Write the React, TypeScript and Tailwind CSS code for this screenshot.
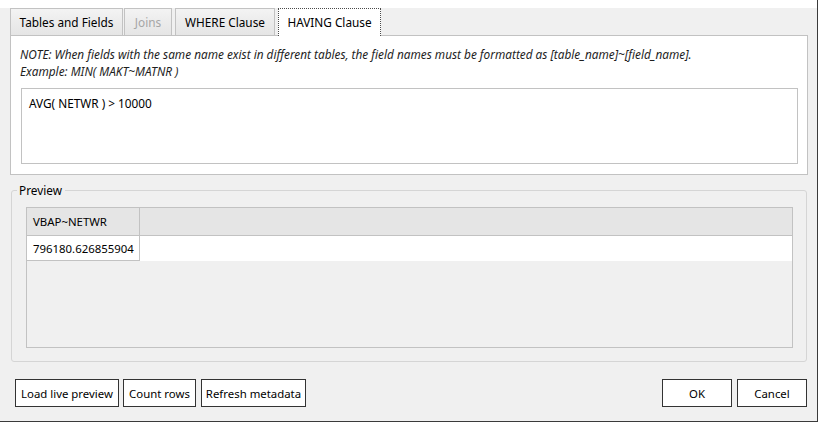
import React from "react"

const tabs = [
  { label: "Tables and Fields", w: "w-[113px]", ml: "ml-0", state: "normal" },
  { label: "Joins", w: "w-[48px]", ml: "ml-[1px]", state: "disabled" },
  { label: "WHERE Clause", w: "w-[100px]", ml: "ml-[3px]", state: "normal" },
  { label: "HAVING Clause", w: "w-[103px]", ml: "ml-[3px]", state: "active" },
]

function Tab({ label, w, ml, state }: { label: string; w: string; ml: string; state: string }) {
  if (state === "active") {
    return (
      <div
        className={`${w} ${ml} relative z-10 -mb-px flex h-[28px] items-center justify-center border border-b-0 border-dotted border-[#4a4a4a] bg-white text-black`}
      >
        {label}
      </div>
    )
  }
  return (
    <div
      className={`${w} ${ml} flex h-[27px] items-center justify-center border border-b-0 border-[#c2c2c2] bg-linear-to-b from-[#f3f3f3] to-[#e5e5e5] ${
        state === "disabled" ? "text-[#a6a6a6]" : "text-black"
      }`}
    >
      {label}
    </div>
  )
}

function Button({ label, w }: { label: string; w: string }) {
  return (
    <button
      className={`${w} flex h-[28px] items-center justify-center border border-[#333333] bg-white text-[11.4px] text-black`}
    >
      {label}
    </button>
  )
}

export default function App() {
  return (
    <div className="h-[423px] w-[819px] bg-white font-['Noto_Sans',sans-serif] text-[11.8px] leading-[17px]">
      <div className="flex h-[422px] w-[818px] flex-col border-r border-b border-[#3a3a3a] bg-[#f0f0f0]">
        {/* strip above tabs */}
        <div className="h-[8px] shrink-0 bg-white" />

        {/* Tab headers */}
        <div className="ml-[10px] flex items-end">
          {tabs.map((t) => (
            <Tab key={t.label} {...t} />
          ))}
        </div>

        {/* Tab page */}
        <div className="ml-[10px] h-[140px] w-[798px] border border-[#c2c2c2] bg-white pt-[10px] pl-[9px]">
          <p className="italic text-[#1e1e1e]">
            NOTE: When fields with the same name exist in different tables, the field names must be formatted as
            [table_name]~[field_name].
          </p>
          <p className="italic text-[#1e1e1e]">Example: MIN( MAKT~MATNR )</p>
          <div className="mt-[8px] ml-px h-[76px] w-[777px] border border-[#c2c2c2] bg-white px-[7px] pt-[6px] text-black">
            AVG( NETWR ) &gt; 10000
          </div>
        </div>

        {/* Preview group */}
        <fieldset className="mt-[7px] ml-[11px] w-[796px] rounded-[3px] border border-[#d5d5d5]">
          <legend className="ml-[5px] px-[2px] pr-[3px] leading-[16px] text-black">Preview</legend>
          <div className="mt-[9px] mb-[13px] ml-[14px] flex h-[141px] w-[767px] flex-col border border-[#c2c2c2] bg-[#f0f0f0] text-[11.4px]">
            <div className="flex h-[28px] shrink-0 border-b border-[#c2c2c2] bg-[#e5e5e5]">
              <div className="flex w-[113px] items-center border-r border-[#c2c2c2] pl-[6px] text-black">VBAP~NETWR</div>
            </div>
            <div className="flex h-[25px] shrink-0 bg-white">
              <div className="flex w-[113px] items-center border-r border-b border-[#c2c2c2] pl-[6px] text-black">
                796180.626855904
              </div>
            </div>
          </div>
        </fieldset>

        {/* Buttons */}
        <div className="mt-[17px] flex items-center pr-[10px] pl-[15px]">
          <Button label="Load live preview" w="w-[104px]" />
          <div className="ml-[4px]">
            <Button label="Count rows" w="w-[73px]" />
          </div>
          <div className="ml-[5px]">
            <Button label="Refresh metadata" w="w-[105px]" />
          </div>
          <div className="ml-auto flex gap-[5px]">
            <Button label="OK" w="w-[70px]" />
            <Button label="Cancel" w="w-[70px]" />
          </div>
        </div>
      </div>
    </div>
  )
}
